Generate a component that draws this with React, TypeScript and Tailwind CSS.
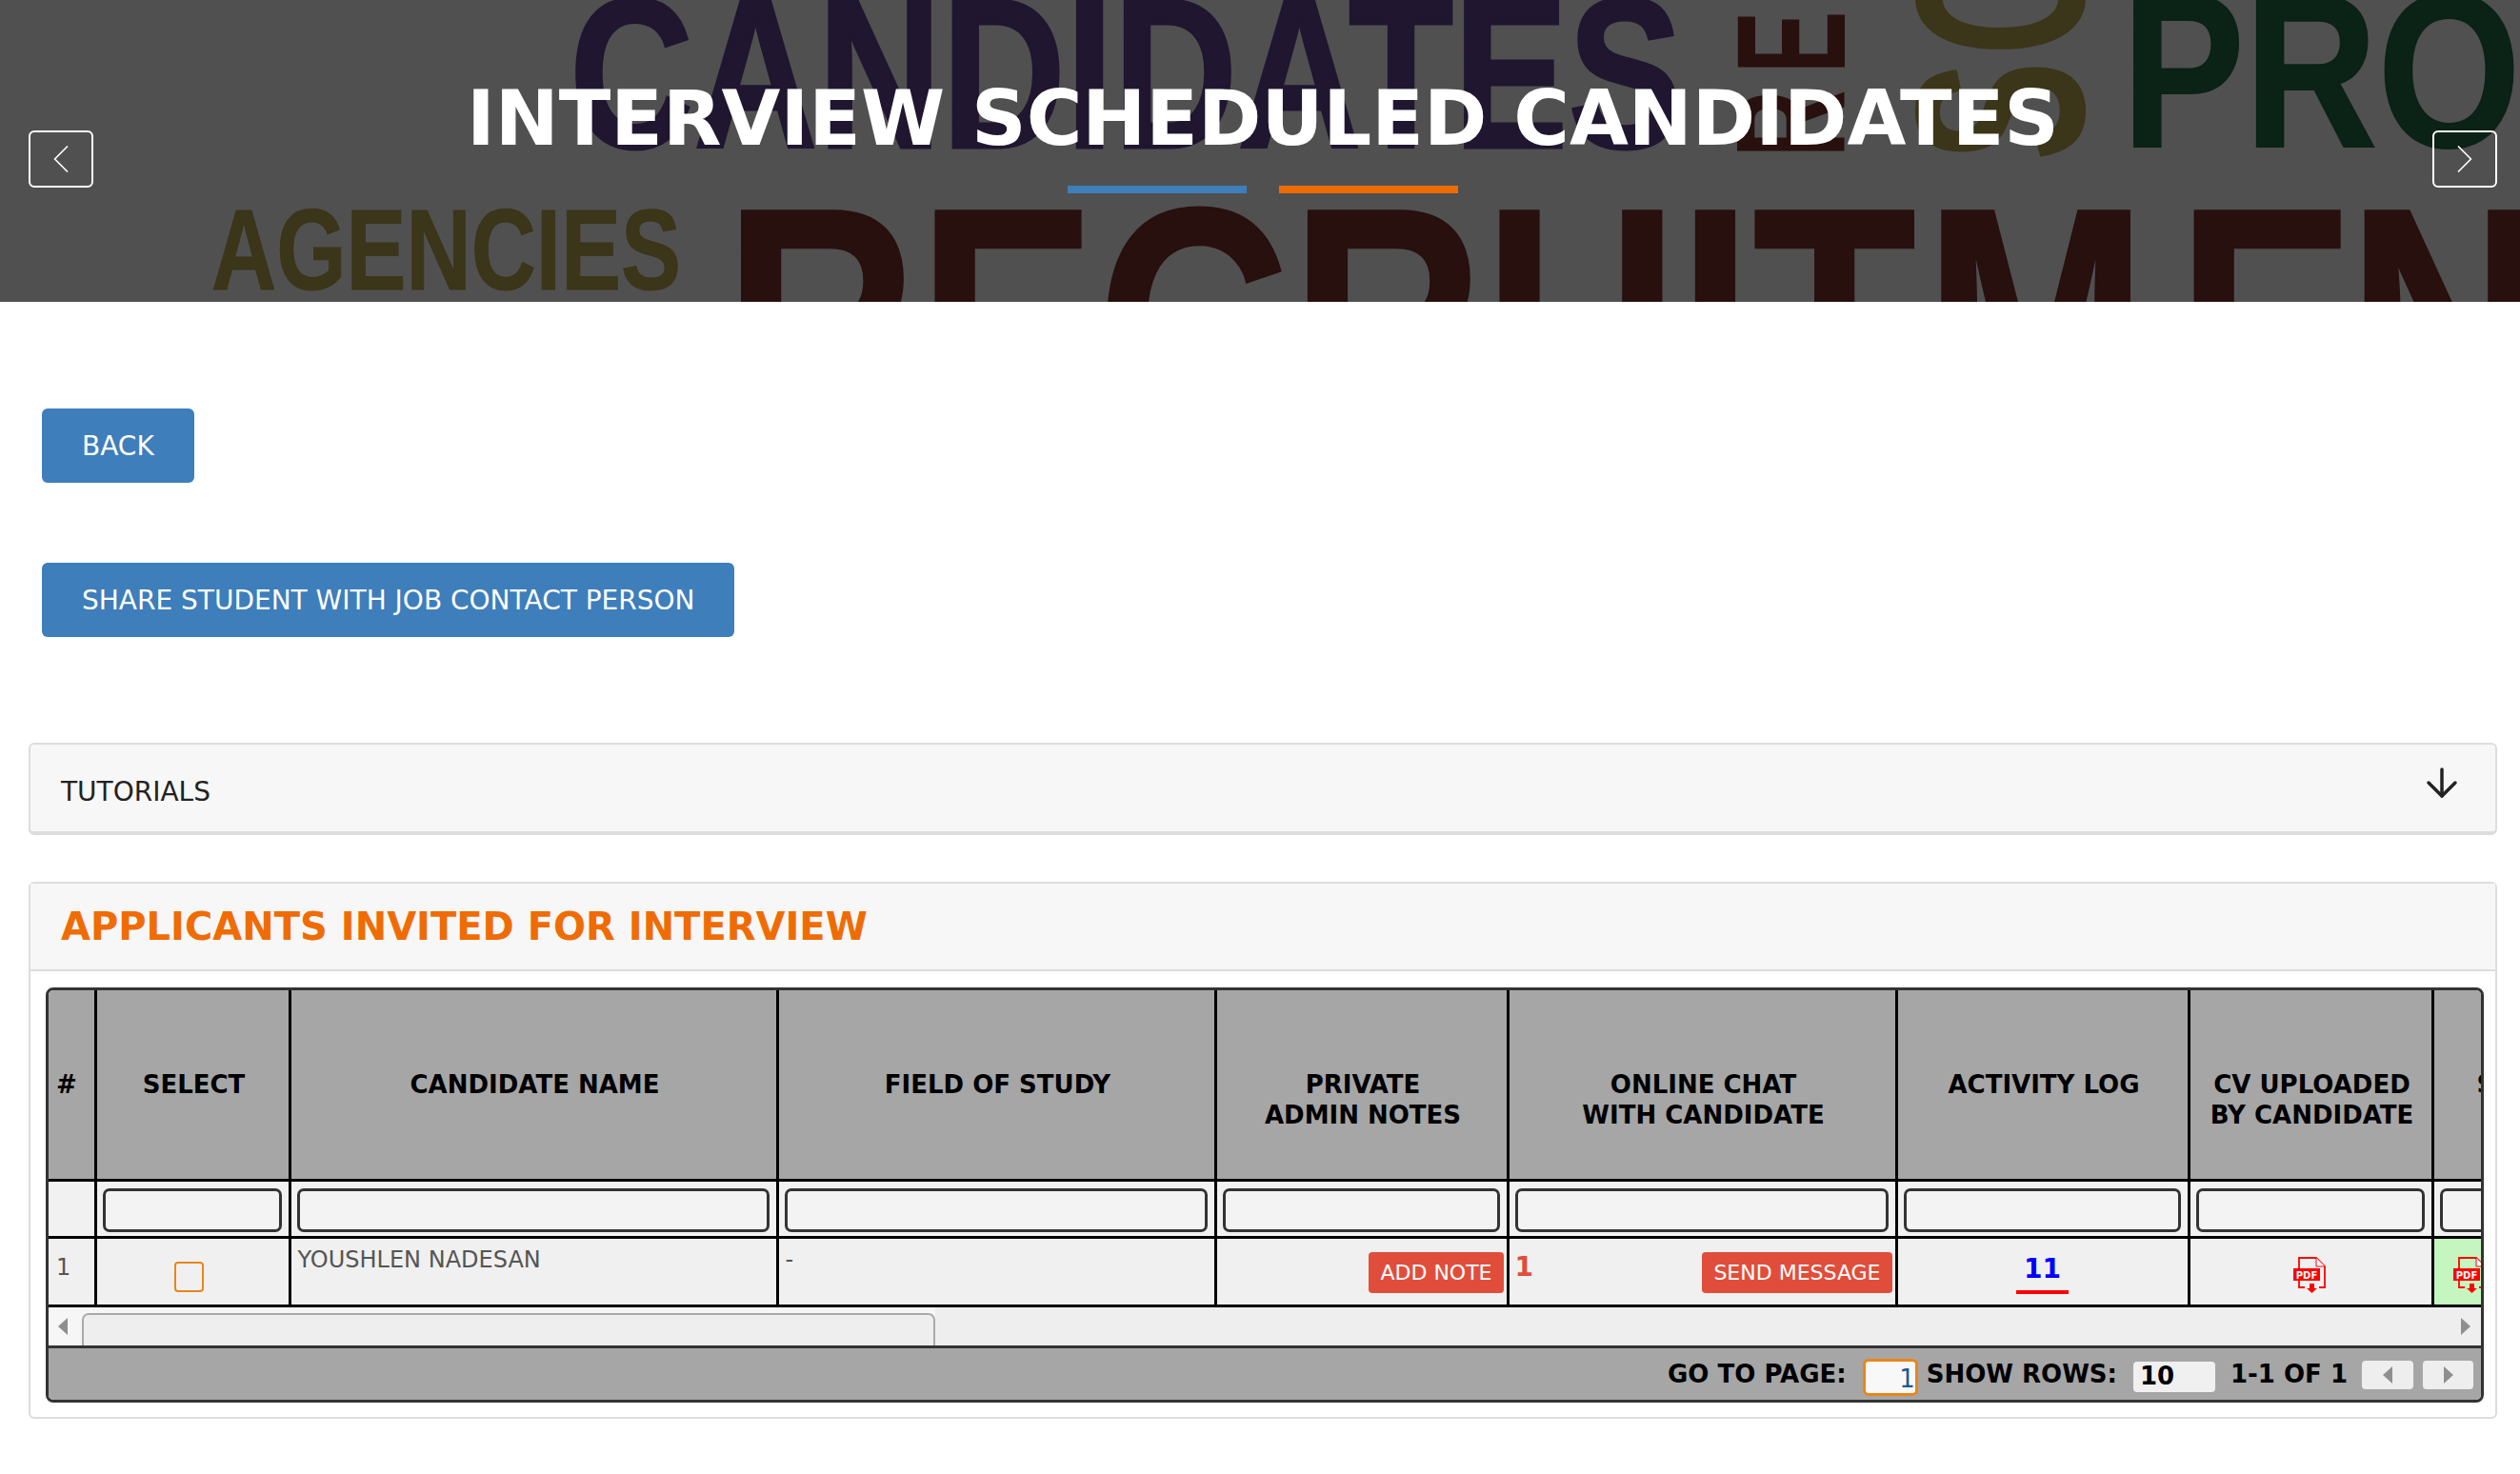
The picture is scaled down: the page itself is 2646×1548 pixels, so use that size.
import { ArrowDown, ChevronLeft, ChevronRight } from 'lucide-react';

const sans = "font-['DejaVu_Sans',sans-serif]";

interface Column {
  key: string;
  width: string;
  lines: string[];
}

const columns: Column[] = [
  { key: 'num', width: 'w-[49px]', lines: ['#'] },
  { key: 'select', width: 'w-[204px]', lines: ['SELECT'] },
  { key: 'name', width: 'w-[512px]', lines: ['CANDIDATE NAME'] },
  { key: 'field', width: 'w-[460px]', lines: ['FIELD OF STUDY'] },
  { key: 'notes', width: 'w-[307px]', lines: ['PRIVATE', 'ADMIN NOTES'] },
  { key: 'chat', width: 'w-[408px]', lines: ['ONLINE CHAT', 'WITH CANDIDATE'] },
  { key: 'log', width: 'w-[307px]', lines: ['ACTIVITY LOG'] },
  { key: 'cv', width: 'w-[256px]', lines: ['CV UPLOADED', 'BY CANDIDATE'] },
  { key: 'shared', width: 'w-[300px]', lines: ['SHARED CV'] },
];

function PdfIcon() {
  return (
    <svg width="34" height="38" viewBox="0 0 34 38" className="block">
      <path d="M6 12V1h18l9 9v22h-6M6 24v8h6" fill="none" stroke="#ff0000" strokeWidth="1.8" />
      <path d="M24 1v9h9" fill="#fff" stroke="#ff0000" strokeWidth="1" />
      <rect x="0" y="12" width="28" height="13" fill="#ff0000" />
      <text x="14" y="22.500" textAnchor="middle" fill="#fff" fontSize="10" fontWeight="700" fontFamily="DejaVu Sans, sans-serif">
        PDF
      </text>
      <path d="M17 28h5v5h3l-5.500 5-5.500-5h3z" fill="#ff0000" />
    </svg>
  );
}

function Triangle({ right = false }: { right?: boolean }) {
  return (
    <svg width="10" height="18" viewBox="0 0 10 18" className="block flex-none">
      <path d={right ? 'M0 0l10 9-10 9z' : 'M10 0L0 9l10 9z'} fill="#8f8f8f" />
    </svg>
  );
}

function HeroWords() {
  return (
    <div aria-hidden="true" className="absolute inset-0 font-['Liberation_Sans',sans-serif] font-bold leading-none whitespace-nowrap select-none">
      <span className="absolute left-[598px] top-[-35px] origin-top-left scale-x-[0.805] text-[224px] text-[#201630] [-webkit-text-stroke:3px_#201630]">CANDIDATES</span>
      <span className="absolute left-[2228px] top-[-40px] origin-top-left scale-x-[0.84] text-[230px] text-[#0b2216] [-webkit-text-stroke:2px_#0b2216]">PROCESS</span>
      <span className="absolute left-[222px] top-[202px] origin-top-left scale-x-[0.78] text-[121px] text-[#3b3519] [-webkit-text-stroke:1px_#3b3519]">AGENCIES</span>
      <span className="absolute left-[760px] top-[166px] origin-top-left scale-x-[0.805] text-[350px] text-[#28100f] [-webkit-text-stroke:2px_#28100f]">
        RECRUI<span className="tracking-[10px]">T</span><span className="tracking-[38px]">M</span><span className="tracking-[-11px]">E</span>NT
      </span>
      <span className="absolute left-[1799px] top-[165px] origin-top-left -rotate-90 scale-x-[0.6] text-[163px] tracking-[29px] text-[#28100f]">RECRUIT</span>
      <span className="absolute left-[1974px] top-[169px] origin-top-left -rotate-90 scale-x-[0.62] text-[253px] tracking-[10px] text-[#3b3519]">SOURCING</span>
    </div>
  );
}

function HeroArrow({ children }: { children: React.ReactNode }) {
  return (
    <button type="button" className="mt-[137px] grid h-[60px] w-[68px] flex-none place-items-center rounded-[6px] border-2 border-white text-white">
      {children}
    </button>
  );
}

export default function App() {
  return (
    <div className={`min-h-[1548px] w-full overflow-hidden bg-white ${sans}`}>
      <header className="relative flex h-[317px] justify-between overflow-hidden bg-[#505050] pr-[24px] pl-[30px]">
        <HeroWords />
        <div className="relative">
          <HeroArrow>
            <ChevronLeft size={52} strokeWidth={0.8} />
          </HeroArrow>
        </div>
        <div className="relative flex flex-col items-center pt-[78px]">
          <h1 className="text-[80px] leading-[94px] font-bold whitespace-nowrap text-white">INTERVIEW SCHEDULED CANDIDATES</h1>
          <div className="mt-[23px] flex gap-[34px]">
            <span className="h-[8px] w-[188px] bg-[#3d7ebb]" />
            <span className="h-[8px] w-[188px] bg-[#ef6c05]" />
          </div>
        </div>
        <div className="relative">
          <HeroArrow>
            <ChevronRight size={52} strokeWidth={0.8} />
          </HeroArrow>
        </div>
      </header>

      <div className="flex flex-col items-start gap-[84px] pt-[112px] pl-[44px]">
        <button type="button" className="h-[78px] rounded-[6px] bg-[#3d7ebb] px-[42px] pt-[1px] text-[28px] text-white">BACK</button>
        <button type="button" className="h-[78px] rounded-[6px] bg-[#3d7ebb] px-[42px] pt-[1px] text-[28px] text-white">SHARE STUDENT WITH JOB CONTACT PERSON</button>
      </div>

      <section className="mt-[111px] ml-[30px] flex h-[97px] w-[2592px] items-center justify-between rounded-[6px] border-2 border-b-4 border-[#dddddd] bg-[#f7f7f7] pr-[32px] pl-[32px]">
        <span className="pt-[9px] text-[28px] text-[#222222]">TUTORIALS</span>
        <ArrowDown size={48} strokeWidth={1.75} className="mb-[12px] text-[#222222]" />
      </section>

      <section className="mt-[49px] ml-[30px] h-[564px] w-[2592px] rounded-[6px] border-2 border-[#dddddd] bg-white">
        <h2 className="flex h-[92px] items-center border-b-2 border-[#dddddd] bg-[#f7f7f7] pl-[32px] text-[40px] font-bold text-[#ef6c05]">
          APPLICANTS INVITED FOR INTERVIEW
        </h2>

        <div className="mt-[17px] mr-[12px] ml-[16px] h-[436px] overflow-hidden rounded-[8px] border-[3px] border-[#333333]">
          <table className="w-[2803px] table-fixed border-collapse text-[24px] text-[#555555]">
            <colgroup>
              {columns.map(col => (
                <col key={col.key} className={col.width} />
              ))}
            </colgroup>
            <thead>
              <tr className="h-[199px] bg-[#a6a6a6]">
                {columns.map((col, index) => (
                  <th
                    key={col.key}
                    className={`border-r-[3px] border-b-[3px] border-black pt-[83px] align-top text-[26px] leading-[32px] font-bold text-black ${index === 8 ? 'pl-[45px] text-left' : index === 0 ? 'pl-[8px] text-left' : 'pl-[3px] text-center'}`}
                  >
                    {col.lines.map(line => (
                      <div key={line} className="whitespace-nowrap">{line}</div>
                    ))}
                  </th>
                ))}
              </tr>
              <tr className="h-[60px] bg-[#f1f1f1]">
                {columns.map((col, index) => (
                  <td key={col.key} className="border-r-[3px] border-b-[3px] border-black pr-[7px] pl-[6px] align-top">
                    {index > 0 && <div className="mt-[7px] h-[46px] rounded-[7px] border-[3px] border-[#333333] bg-[#f3f3f3]" />}
                  </td>
                ))}
              </tr>
            </thead>
            <tbody>
              <tr className="h-[72px] bg-[#f0f0f0]">
                <td className="border-r-[3px] border-b-[3px] border-black pt-[14px] pl-[8px] align-top leading-[32px]">1</td>
                <td className="border-r-[3px] border-b-[3px] border-black align-top">
                  <div className="mt-[24px] ml-[81px] h-[32px] w-[31px] rounded-[4px] border-2 border-[#e8861a]" />
                </td>
                <td className="border-r-[3px] border-b-[3px] border-black pt-[6px] pl-[7px] align-top leading-[32px] whitespace-nowrap">YOUSHLEN NADESAN</td>
                <td className="border-r-[3px] border-b-[3px] border-black pt-[6px] pl-[7px] align-top leading-[32px]">-</td>
                <td className="border-r-[3px] border-b-[3px] border-black pr-[3px] text-right align-top">
                  <button type="button" className="mt-[14px] h-[43px] rounded-[4px] bg-[#e04e3b] px-[12px] text-[22px] text-white">ADD NOTE</button>
                </td>
                <td className="border-r-[3px] border-b-[3px] border-black pr-[3px] pl-[6px] align-top">
                  <div className="flex items-start justify-between">
                    <span className="pt-[14px] text-[28px] leading-[32px] font-bold text-[#df4e3c]">1</span>
                    <button type="button" className="mt-[14px] h-[43px] rounded-[4px] bg-[#e04e3b] px-[12px] text-[22px] whitespace-nowrap text-white">SEND MESSAGE</button>
                  </div>
                </td>
                <td className="border-r-[3px] border-b-[3px] border-black text-center align-top">
                  <span className="mt-[14px] inline-block w-[55px] border-b-4 border-[#ff0000] pb-[5px] text-[28px] leading-[35px] font-bold text-[#0000ff]">11</span>
                </td>
                <td className="border-r-[3px] border-b-[3px] border-black align-top">
                  <div className="mt-[19px] ml-[108px]"><PdfIcon /></div>
                </td>
                <td className="border-b-[3px] border-black bg-[#c6f6bf] align-top">
                  <div className="mt-[19px] ml-[20px]"><PdfIcon /></div>
                </td>
              </tr>
            </tbody>
          </table>

          <div className="flex h-[43px] items-center justify-between border-b-[3px] border-[#333333] bg-[#eeeeee] pr-[11px]">
            <div className="flex h-full items-center bg-[#f6f6f6] pl-[10px]">
              <Triangle />
              <div className="ml-[15px] h-[34px] w-[896px] self-end rounded-t-[7px] border-2 border-b-0 border-[#aaaaaa] bg-[#eeeeee]" />
            </div>
            <Triangle right />
          </div>

          <div className="flex h-[56px] items-center justify-end bg-[#a6a6a6] pr-[8px] text-[26px] font-bold text-black">
            <span className="whitespace-nowrap">GO TO PAGE:</span>
            <div className="mt-[5px] ml-[17px] flex h-[39px] w-[58px] items-end justify-end rounded-[6px] border-[3px] border-[#e8861a] bg-[#f8f8f8] text-[26px] leading-[30px] font-normal text-[#1a5a90]">1</div>
            <span className="ml-[9px] whitespace-nowrap">SHOW ROWS:</span>
            <div className="mt-[4px] ml-[17px] flex h-[32px] w-[86px] items-center rounded-[4px] bg-[#f0f0f0] pl-[7px]">10</div>
            <span className="ml-[16px] whitespace-nowrap">1-1 OF 1</span>
            <div className="ml-[15px] grid h-[30px] w-[54px] place-items-center rounded-[4px] bg-[#eeeeee]"><Triangle /></div>
            <div className="ml-[10px] grid h-[30px] w-[53px] place-items-center rounded-[4px] bg-[#eeeeee]"><Triangle right /></div>
          </div>
        </div>
      </section>
    </div>
  );
}
